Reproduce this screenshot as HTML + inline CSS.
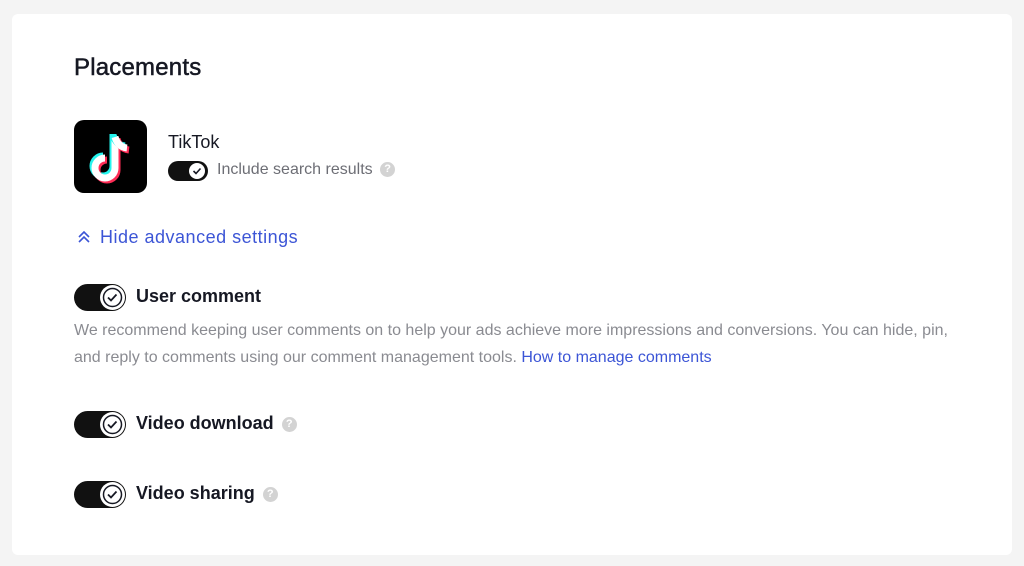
<!DOCTYPE html>
<html><head><style>
*{margin:0;padding:0;box-sizing:border-box}
body{width:1024px;height:566px;background:#f4f4f4;font-family:"Liberation Sans",sans-serif;position:relative;overflow:hidden}
.card{position:absolute;left:12px;top:14px;width:1000px;height:541px;background:#fff;border-radius:6px}
.a{position:absolute;white-space:nowrap}
.tg{position:absolute;background:#111;border-radius:14px}
.tg .k{position:absolute;background:#fff;border-radius:50%}
.q{display:inline-block;width:15px;height:15px;border-radius:50%;background:#d3d3d3;color:#fff;font-size:11px;font-weight:bold;text-align:center;line-height:15px;vertical-align:middle}
</style></head><body>
<div class="card"></div>
<div class="a" style="left:74px;top:54px;font-size:24px;color:#161823;letter-spacing:0.2px;-webkit-text-stroke:0.5px #161823">Placements</div>
<div class="a" style="left:74px;top:120px;width:73px;height:73px;background:#000;border-radius:10px">
<svg width="73" height="73" viewBox="0 0 73 73">
<g fill="none" stroke-width="7" stroke-linecap="butt">
<path d="M41 16 V48 a10 10 0 1 1 -10 -10" stroke="#25f4ee" transform="translate(-2,-2)"/>
<path d="M41 16 V48 a10 10 0 1 1 -10 -10" stroke="#fe2c55" transform="translate(2,2)"/>
<path d="M41 16 V48 a10 10 0 1 1 -10 -10" stroke="#fff"/>
<path d="M41 17 q3 10 12 11" stroke="#25f4ee" transform="translate(-2,-2)"/>
<path d="M41 17 q3 10 12 11" stroke="#fe2c55" transform="translate(2,2)"/>
<path d="M41 17 q3 10 12 11" stroke="#fff"/>
</g></svg></div>
<div class="a" style="left:168px;top:132px;font-size:18px;color:#161823">TikTok</div>
<div class="tg" style="left:168px;top:161px;width:40px;height:20px"><div class="k" style="left:21px;top:2px;width:16px;height:16px"><svg width="16" height="16"><path d="M4.5 8 l2.5 2.5 l4.5-5" stroke="#161823" stroke-width="1.6" fill="none"/></svg></div></div>
<div class="a" style="left:217px;top:161px;font-size:16px;color:#6d6e75">Include search results <span class="q" style="margin-left:3px">?</span></div>
<div class="a" style="left:77px;top:227px;font-size:18px;letter-spacing:0.5px;color:#3c55d6"><svg width="14" height="14" style="vertical-align:-1px;margin-right:9px"><path d="M2 7 l5-5 l5 5 M2 12 l5-5 l5 5" stroke="#3c55d6" stroke-width="1.6" fill="none"/></svg>Hide advanced settings</div>
<div class="tg" style="left:74px;top:284px;width:52px;height:27px"><div class="k" style="left:26px;top:1px;width:25px;height:25px"><svg width="25" height="25"><circle cx="12.5" cy="12.5" r="9" stroke="#161823" stroke-width="1.5" fill="none"/><path d="M8 12.5 l3 3 l5.5-6" stroke="#161823" stroke-width="1.8" fill="none"/></svg></div></div>
<div class="a" style="left:136px;top:286px;font-size:18px;font-weight:bold;color:#161823">User comment</div>
<div class="a" style="left:74px;top:317px;font-size:16px;line-height:27px;color:#8a8b91">We recommend keeping user comments on to help your ads achieve more impressions and conversions. You can hide, pin,<br>and reply to comments using our comment management tools. <span style="color:#3c55d6">How to manage comments</span></div>
<div class="tg" style="left:74px;top:411px;width:52px;height:27px"><div class="k" style="left:26px;top:1px;width:25px;height:25px"><svg width="25" height="25"><circle cx="12.5" cy="12.5" r="9" stroke="#161823" stroke-width="1.5" fill="none"/><path d="M8 12.5 l3 3 l5.5-6" stroke="#161823" stroke-width="1.8" fill="none"/></svg></div></div>
<div class="a" style="left:136px;top:413px;font-size:18px;font-weight:bold;color:#161823">Video download <span class="q" style="margin-left:3px">?</span></div>
<div class="tg" style="left:74px;top:481px;width:52px;height:27px"><div class="k" style="left:26px;top:1px;width:25px;height:25px"><svg width="25" height="25"><circle cx="12.5" cy="12.5" r="9" stroke="#161823" stroke-width="1.5" fill="none"/><path d="M8 12.5 l3 3 l5.5-6" stroke="#161823" stroke-width="1.8" fill="none"/></svg></div></div>
<div class="a" style="left:136px;top:483px;font-size:18px;font-weight:bold;color:#161823">Video sharing <span class="q" style="margin-left:3px">?</span></div>
</body></html>
